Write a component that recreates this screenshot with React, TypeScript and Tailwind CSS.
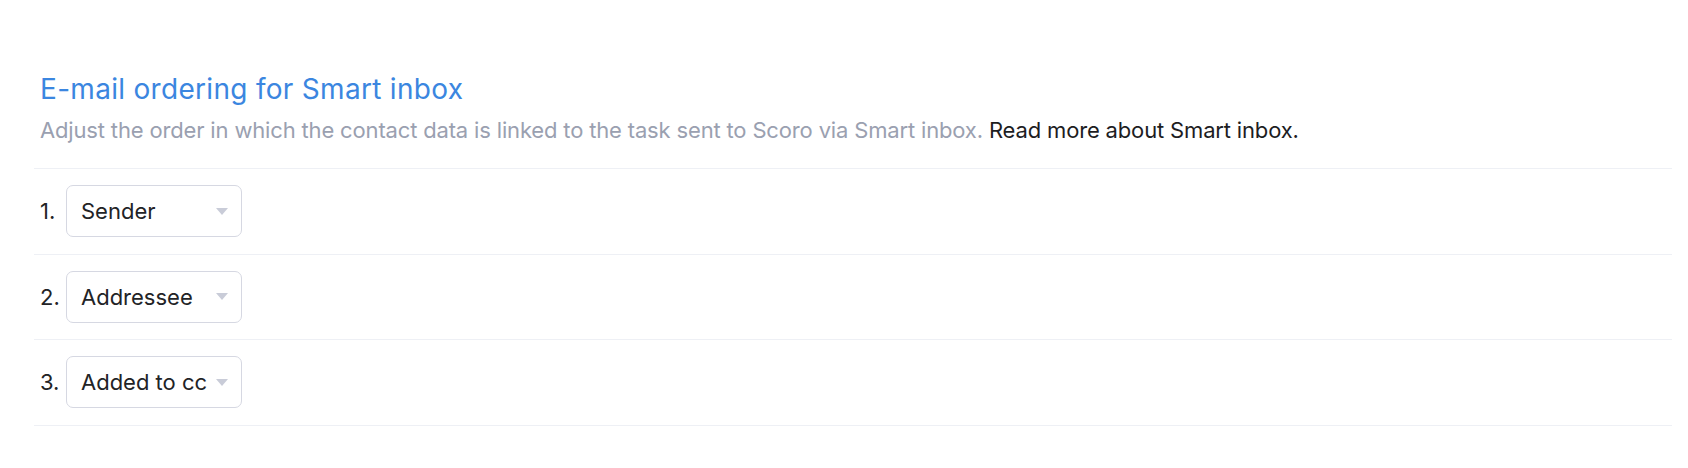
import React from 'react';

const options = ['Sender', 'Addressee', 'Added to cc'];

const SelectBox = ({ value }: { value: string }) => (
  <div className="flex items-center justify-between w-[176px] h-[52px] pl-[14px] pr-[13px] border border-[#d6d8e2] rounded-[7px] bg-white">
    <span className="text-[22px] leading-[28px] text-[#222326] whitespace-nowrap">{value}</span>
    <svg width="12" height="7" viewBox="0 0 12 7" className="shrink-0">
      <path d="M0 0 H12 L6 7 Z" fill="#c9ccd8" />
    </svg>
  </div>
);

const App = () => {
  return (
    <div className="w-full min-h-screen bg-white pl-[34px] pr-[16px] pt-[72px]" style={{ fontFamily: 'Inter, "Noto Sans", sans-serif' }}>
      {/* Header */}
      <div className="pl-[6px] pb-[24px] border-b border-[#eef0f5]">
        <h2 className="text-[28px] leading-[34px] font-normal tracking-[0.3px] text-[#3b86e0]">E-mail ordering for Smart inbox</h2>
        <p className="mt-[10px] text-[22px] leading-[28px] tracking-[-0.16px] text-[#9aa0b0]">
          Adjust the order in which the contact data is linked to the task sent to Scoro via Smart inbox.{' '}
          <a href="#smart-inbox" className="text-[#1d1d1f]">Read more about Smart inbox.</a>
        </p>
      </div>

      {/* Ordering rows */}
      {options.map((opt, i) => (
        <div key={opt} className="flex items-center gap-[7px] pl-[6px] pt-[16px] pb-[16.7px] border-b border-[#eef0f5]">
          <span className="text-[22px] leading-[28px] text-[#222326] w-[19px]">{i + 1}.</span>
          <SelectBox value={opt} />
        </div>
      ))}
    </div>
  );
};

export default App;
